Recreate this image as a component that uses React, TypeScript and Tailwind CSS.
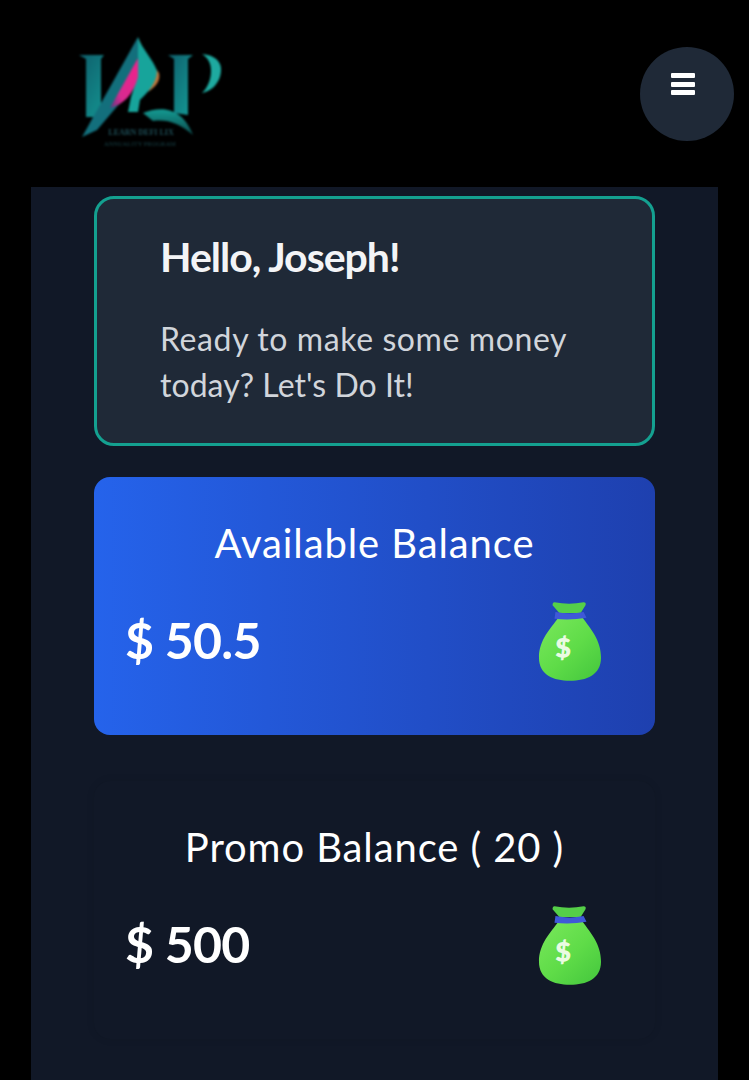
function Bag() {
  return (
    <svg width="64" height="84" viewBox="0 0 66 84" className="mr-px shrink-0 translate-y-[2px]">
      <defs>
        <linearGradient id="bagG" x1="0" y1="0" x2="0.9" y2="1">
          <stop offset="0" stopColor="#7ae85c" />
          <stop offset="0.55" stopColor="#5fdc48" />
          <stop offset="1" stopColor="#46c83e" />
        </linearGradient>
      </defs>
      <path d="M17 1 Q32 4 47 1 Q50 1 49 4 L44 12 L22 12 L15 4 Q15 1 17 1Z" fill="#55cf48" />
      <path d="M21 17 C13 28 1 40 1 58 C1 76 16 82 33 82 C50 82 65 76 65 58 C65 40 54 28 46 17Z" fill="url(#bagG)" />
      <path d="M18 11 Q33 14 47 11 L50 17 Q33 20 17 18Z" fill="#3f58d8" />
      <text x="26" y="57" textAnchor="middle" fontSize="28" fontWeight="800" fill="#eafbe2" fontFamily="Lato, sans-serif">$</text>
    </svg>
  );
}

function Logo() {
  return (
    <svg width="150" height="120" viewBox="0 0 150 120" className="block">
      <defs>
        <linearGradient id="lt" x1="0" y1="0" x2="1" y2="1">
          <stop offset="0" stopColor="#0f5f6c" />
          <stop offset="1" stopColor="#149a95" />
        </linearGradient>
        <linearGradient id="lp" x1="1" y1="0" x2="0" y2="1">
          <stop offset="0" stopColor="#f0208a" />
          <stop offset="0.7" stopColor="#d82a90" />
          <stop offset="1" stopColor="#5a3a80" />
        </linearGradient>
        <linearGradient id="lb" x1="0" y1="0" x2="0" y2="1">
          <stop offset="0" stopColor="#149a92" />
          <stop offset="1" stopColor="#0c4a4c" />
        </linearGradient>
      </defs>
      <g className="blur-[0.8px]">
        <path d="M4 20 L29 20 L26 24 L26 74 L38 74 L28 82 L11 82 L11 24Z" fill="url(#lt)" />
        <path d="M63 2 C67 14 74 24 84 38 C86 46 80 52 73 57 C78 48 78 38 74 28Z" fill="#c0743a" />
        <path d="M63 2 C67 14 78 24 82 36 C82 48 72 58 65 65 L63 77 L53 77 L56 62 L63 40Z" fill="#17a49b" />
        <path d="M63 2 L7 102 L22 95 L45 68 L63 23Z" fill="#136f7c" />
        <path d="M63 23 L35 73 C48 70 58 60 63 42Z" fill="url(#lp)" />
        <path d="M93 20 L118 20 L113 24 L113 80 L99 78 L99 24Z" fill="url(#lt)" />
        <path d="M68 78 C84 72 106 70 118 100 C104 88 92 84 78 86Z" fill="url(#lb)" />
        <path d="M127 19 C140 20 147 27 146 36 C145 50 134 57 127 58 C133 52 136 44 136 36 C136 28 133 23 127 19Z" fill="#1eaaa0" />
        <text x="66" y="100" textAnchor="middle" fontSize="8" fontWeight="700" fill="#1e4f58" fontFamily="'Liberation Serif', serif">LEARN DEFI LIX</text>
        <text x="65" y="111" textAnchor="middle" fontSize="6.5" fill="#174248" fontFamily="'Liberation Serif', serif">ANNUALITY PROGRAM</text>
      </g>
    </svg>
  );
}

function BalanceCard({ title, amount, className }: { title: string; amount: string; className: string }) {
  return (
    <section className={`rounded-2xl pl-[31px] pr-[52px] ${className}`}>
      <h2 className="-mr-[21px] pt-[39px] text-center text-[40px] leading-[54px] tracking-[0.9px] text-white">{title}</h2>
      <div className="mt-[28px] flex items-center justify-between">
        <p className="text-[50px] leading-[60px] font-bold tracking-[-0.7px] text-white">{amount}</p>
        <Bag />
      </div>
    </section>
  );
}

export default function App() {
  return (
    <div className="h-[1080px] w-[749px] overflow-hidden bg-black font-['Lato','Open_Sans',sans-serif]">
      <header className="flex h-[187px] items-start justify-between pr-[15px]">
        <div className="pl-[75px] pt-[35px]"><Logo /></div>
        <button className="mt-[47px] flex h-[94px] w-[94px] justify-center rounded-full bg-[#1f2937] pt-[26px]">
          <span className="mr-2 flex h-[22px] w-[24px] flex-col justify-between">
            <span className="h-[5px] rounded-[1px] bg-white" />
            <span className="h-[5px] rounded-[1px] bg-white" />
            <span className="h-[5px] rounded-[1px] bg-white" />
          </span>
        </button>
      </header>
      <main className="mx-[31px] h-[893px] w-[687px] bg-[#111827] px-[63px] pt-[9px]">
        <section className="h-[250px] rounded-[20px] border-[3px] border-[#14a090] bg-[#1f2937] pl-[63px] pt-[34px]">
          <h1 className="text-[41px] leading-[48px] font-bold tracking-[-1px] text-[#f3f4f6]">Hello, Joseph!</h1>
          <p className="mt-[35px] text-[32px] leading-[46px] tracking-[0.6px] text-[#d1d5db]">Ready to make some money<br /><span className="tracking-[0.05px]">today? Let's Do It!</span></p>
        </section>
        <BalanceCard title="Available Balance" amount="$ 50.5" className="mt-[31px] h-[258px] bg-gradient-to-r from-[#2563eb] to-[#1e40af]" />
        <BalanceCard title="Promo Balance ( 20 )" amount="$ 500" className="mt-[46px] h-[258px] bg-[#111827] shadow-[0_0_8px_rgba(0,0,0,0.08)]" />
      </main>
    </div>
  );
}
